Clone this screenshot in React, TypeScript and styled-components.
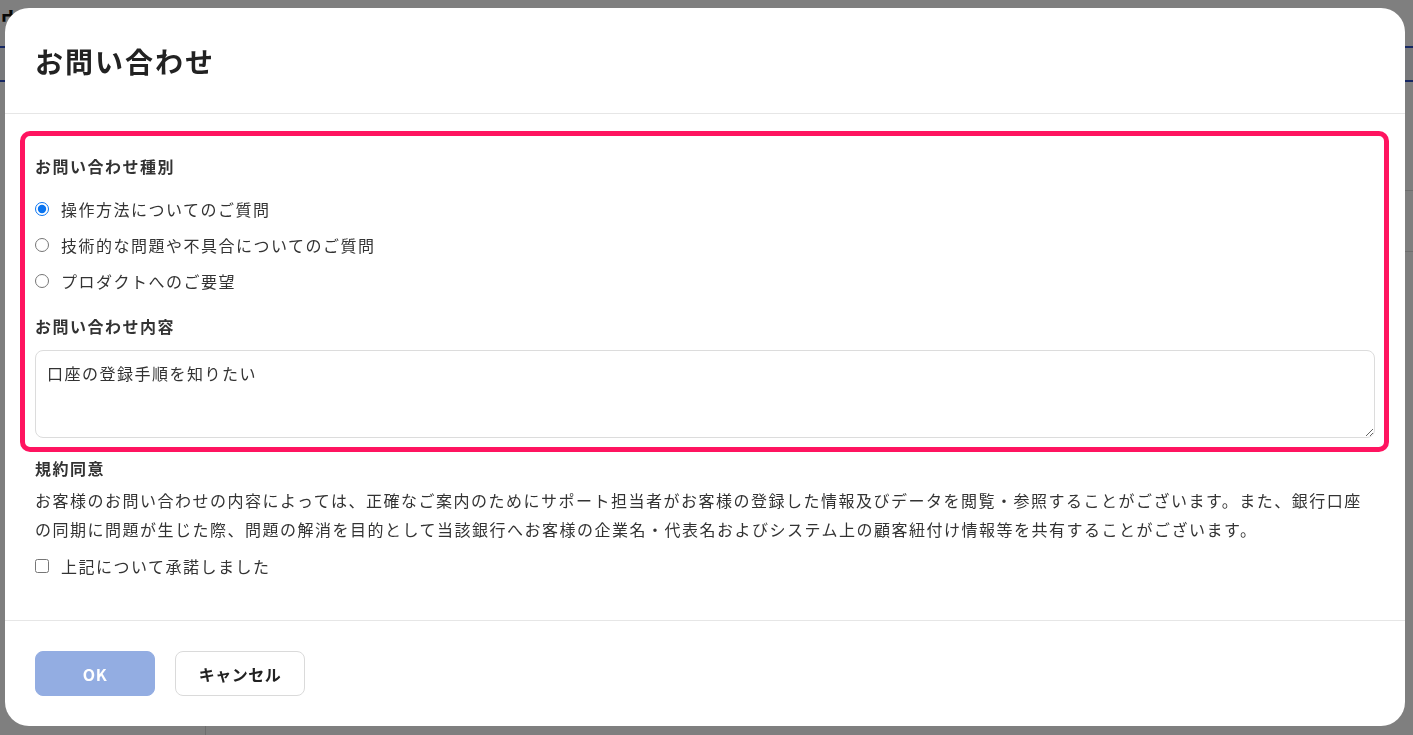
import React, { useState } from 'react';
import styled, { createGlobalStyle } from 'styled-components';

const GlobalStyle = createGlobalStyle`
  html, body {
    margin: 0;
    padding: 0;
    height: 100%;
    overflow: hidden;
  }
  body {
    font-family: "Noto Sans CJK JP", "Liberation Sans", sans-serif;
    color: #333;
    background: #fff;
  }
`;

const Page = styled.div`
  height: 735px;
  display: flex;
  flex-direction: column;
`;

const AppHeader = styled.header`
  height: 48px;
  display: flex;
  align-items: flex-start;
  border-bottom: 2px solid #2c4fc4;
  font-size: 22px;
  font-weight: 700;
  color: #111;
  padding-top: 2px;
  box-sizing: border-box;
`;

const SubNav = styled.div`
  height: 32px;
  background: #f0f2f7;
  border-bottom: 2px solid #2c4fc4;
`;

const PageBody = styled.div`
  flex: 1;
  display: flex;
`;

const Side = styled.div`
  width: 205px;
  border-right: 1px solid #ddd;
`;

const Main = styled.div`
  flex: 1;
  padding-top: 48px;
`;

const MainRow = styled.div`
  height: 60px;
  border-bottom: 1px solid #ddd;
`;

const Overlay = styled.div`
  position: fixed;
  inset: 0;
  background: rgba(0, 0, 0, 0.5);
  padding: 8px 0 0 5px;
`;

const Modal = styled.div`
  width: 1400px;
  background: #fff;
  border-radius: 24px;
  overflow: hidden;
  letter-spacing: 1.5px;
`;

const ModalHeader = styled.div`
  height: 106px;
  box-sizing: border-box;
  padding: 0 30px;
  display: flex;
  align-items: center;
  border-bottom: 1px solid #e6e6e6;
`;

const Title = styled.h1`
  margin: 0;
  font-size: 28px;
  line-height: 42px;
  font-weight: 700;
  color: #222;
  letter-spacing: 2px;
`;

const ModalBody = styled.div`
  height: 506px;
  box-sizing: border-box;
  padding: 40px 30px 0;
  display: flex;
  flex-direction: column;
`;

const Highlighted = styled.div`
  position: relative;
  display: flex;
  flex-direction: column;
`;

const HighlightFrame = styled.div`
  position: absolute;
  top: -23px;
  left: -15px;
  right: -14px;
  bottom: -14px;
  border: 5px solid #ff1460;
  border-radius: 10px;
  pointer-events: none;
`;

const FieldLabel = styled.div<{ $gap: number }>`
  font-size: 16px;
  line-height: 24px;
  font-weight: 700;
  color: #333;
  margin-bottom: ${(p) => p.$gap}px;
`;

const RadioGroup = styled.div`
  display: flex;
  flex-direction: column;
  margin-bottom: 15px;
`;

const OptionRow = styled.label`
  display: flex;
  align-items: center;
  height: 36px;
  font-size: 16px;
  color: #333;
  cursor: pointer;

  input {
    margin: 0 12px 0 0;
    width: 14px;
    height: 14px;
    accent-color: #0a74f0;
  }
`;

const TextArea = styled.textarea`
  display: block;
  box-sizing: border-box;
  width: 100%;
  height: 88px;
  padding: 10px 11px;
  border: 1px solid #dcdcdc;
  border-radius: 8px;
  font-family: inherit;
  font-size: 16px;
  line-height: 24px;
  letter-spacing: 1.5px;
  color: #333;
  outline: none;
`;

const Terms = styled.div`
  margin-top: 18px;
  display: flex;
  flex-direction: column;
`;

const Paragraph = styled.p`
  margin: 0 0 4px;
  font-size: 16px;
  line-height: 28.8px;
  color: #333;
`;

const ModalFooter = styled.div`
  height: 106px;
  box-sizing: border-box;
  border-top: 1px solid #e6e6e6;
  padding: 0 30px;
  display: flex;
  align-items: center;
  gap: 20px;
`;

const Button = styled.button<{ $primary?: boolean }>`
  height: 45px;
  width: ${(p) => (p.$primary ? 120 : 130)}px;
  border-radius: 8px;
  font-family: inherit;
  font-size: 16px;
  font-weight: 700;
  letter-spacing: 0.5px;
  border: 1px solid ${(p) => (p.$primary ? '#93ade2' : '#dadada')};
  background: ${(p) => (p.$primary ? '#93ade2' : '#fff')};
  color: ${(p) => (p.$primary ? '#fff' : '#222')};
  cursor: ${(p) => (p.$primary ? 'default' : 'pointer')};
`;

const options = [
  '操作方法についてのご質問',
  '技術的な問題や不具合についてのご質問',
  'プロダクトへのご要望',
];

const App = () => {
  const [kind, setKind] = useState(0);
  const [agreed, setAgreed] = useState(false);
  const [text, setText] = useState('口座の登録手順を知りたい');

  return (
    <>
      <GlobalStyle />
      <Page>
        <AppHeader>ウォレット</AppHeader>
        <SubNav />
        <PageBody>
          <Side />
          <Main>
            <MainRow />
            <MainRow />
          </Main>
        </PageBody>
      </Page>

      <Overlay>
        <Modal role="dialog" aria-modal="true">
          <ModalHeader>
            <Title>お問い合わせ</Title>
          </ModalHeader>

          <ModalBody>
            <Highlighted>
              <FieldLabel $gap={13}>お問い合わせ種別</FieldLabel>
              <RadioGroup>
                {options.map((label, i) => (
                  <OptionRow key={label}>
                    <input
                      type="radio"
                      name="kind"
                      checked={kind === i}
                      onChange={() => setKind(i)}
                    />
                    {label}
                  </OptionRow>
                ))}
              </RadioGroup>

              <FieldLabel $gap={12}>お問い合わせ内容</FieldLabel>
              <TextArea value={text} onChange={(e) => setText(e.target.value)} />
              <HighlightFrame />
            </Highlighted>

            <Terms>
              <FieldLabel $gap={6}>規約同意</FieldLabel>
              <Paragraph>
                お客様のお問い合わせの内容によっては、正確なご案内のためにサポート担当者がお客様の登録した情報及びデータを閲覧・参照することがございます。また、銀行口座の同期に問題が生じた際、問題の解消を目的として当該銀行へお客様の企業名・代表名およびシステム上の顧客紐付け情報等を共有することがございます。
              </Paragraph>
              <OptionRow>
                <input
                  type="checkbox"
                  checked={agreed}
                  onChange={(e) => setAgreed(e.target.checked)}
                />
                上記について承諾しました
              </OptionRow>
            </Terms>
          </ModalBody>

          <ModalFooter>
            <Button $primary disabled={!agreed}>
              OK
            </Button>
            <Button>キャンセル</Button>
          </ModalFooter>
        </Modal>
      </Overlay>
    </>
  );
};

export default App;
